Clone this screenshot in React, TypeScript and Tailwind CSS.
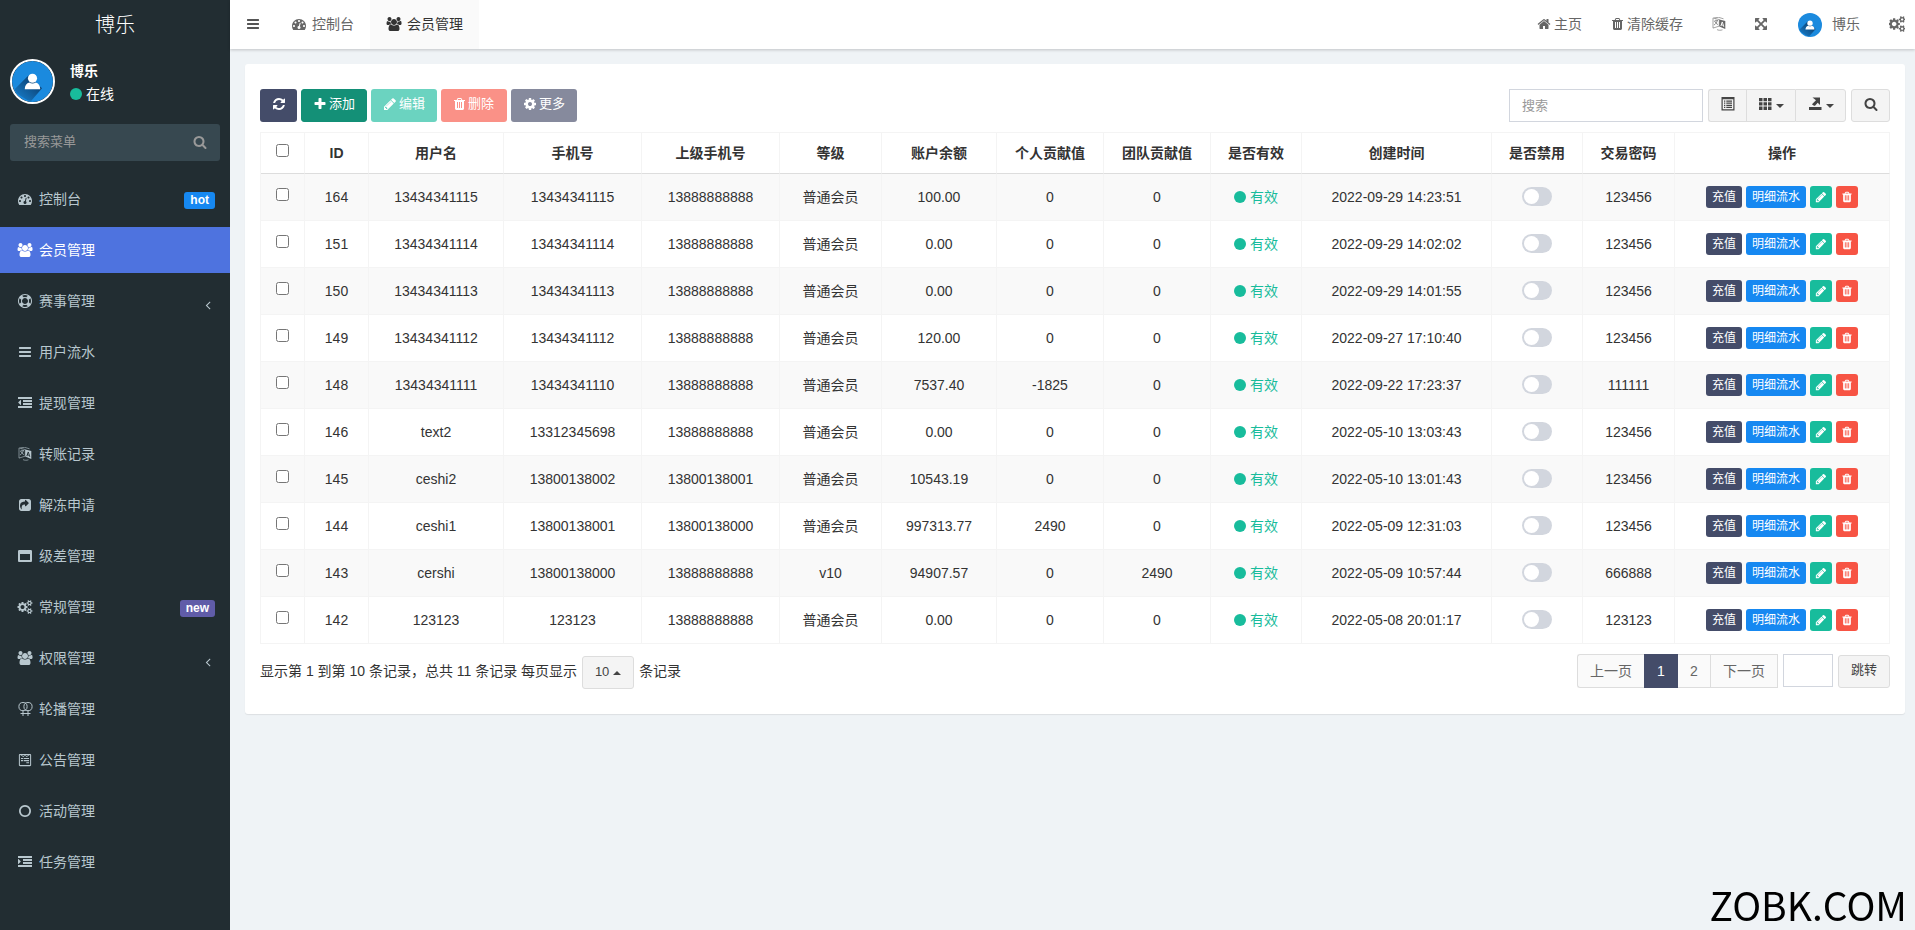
import React from "react";
import { FaWpforms } from "react-icons/fa";

const FONT = "font-['Liberation_Sans','Noto_Sans_CJK_SC',sans-serif]";

const BARS_TAIL =
  "m1440 768v192q0 13-9.500 22.500t-22.500 9.500h-1728q-13 0-22.500-9.500t-9.500-22.500v-192q0-13 9.500-22.500t22.500-9.500h1728q13 0 22.500 9.500t9.500 22.500zm0-384v192q0 13-9.500 22.500t-22.500 9.500h-1088q-13 0-22.500-9.500t-9.500-22.500v-192q0-13 9.500-22.500t22.500-9.500h1088q13 0 22.500 9.500t9.500 22.500zm0-384v192q0 13-9.500 22.500t-22.500 9.500h-1088q-13 0-22.500-9.500t-9.500-22.500v-192q0-13 9.500-22.500t22.500-9.500h1088q13 0 22.500 9.500t9.500 22.500zm0-384v192q0 13-9.500 22.500t-22.500 9.500h-1728q-13 0-22.500-9.500t-9.500-22.500v-192q0-13 9.500-22.500t22.500-9.500h1728q13 0 22.500 9.500t9.500 22.500z";

const PATHS: Record<string, string> = {
  bars: "M1664 1344v128q0 26-19 45t-45 19h-1408q-26 0-45-19t-19-45v-128q0-26 19-45t45-19h1408q26 0 45 19t19 45zm0-512v128q0 26-19 45t-45 19h-1408q-26 0-45-19t-19-45v-128q0-26 19-45t45-19h1408q26 0 45 19t19 45zm0-512v128q0 26-19 45t-45 19h-1408q-26 0-45-19t-19-45v-128q0-26 19-45t45-19h1408q26 0 45 19t19 45z",
  trash:
    "M704 1376v-704q0-14-9-23t-23-9h-64q-14 0-23 9t-9 23v704q0 14 9 23t23 9h64q14 0 23-9t9-23zm256 0v-704q0-14-9-23t-23-9h-64q-14 0-23 9t-9 23v704q0 14 9 23t23 9h64q14 0 23-9t9-23zm256 0v-704q0-14-9-23t-23-9h-64q-14 0-23 9t-9 23v704q0 14 9 23t23 9h64q14 0 23-9t9-23zm-544-992h448l-48-117q-7-9-17-11h-317q-10 2-17 11zm928 32v64q0 14-9 23t-23 9h-96v948q0 83-47 143.500t-113 60.500h-832q-66 0-113-58.500t-47-141.500v-952h-96q-14 0-23-9t-9-23v-64q0-14 9-23t23-9h309l70-167q15-37 54-63t79-26h320q40 0 79 26t54 63l70 167h309q14 0 23 9t9 23z",
  pencil:
    "M491 1536l91-91-235-235-91 91v107h128v128h107zm523-928q0-22-22-22-10 0-17 7l-542 542q-7 7-7 17 0 22 22 22 10 0 17-7l542-542q7-7 7-17zm-54-192l416 416-832 832h-416v-416zm683 96q0 53-37 90l-166 166-416-416 166-165q36-38 90-38 53 0 91 38l235 234q37 39 37 91z",
  refresh:
    "M1639 1056q0 5-1 7-64 268-268 434.500t-478 166.500q-146 0-282.500-55t-243.500-157l-129 129q-19 19-45 19t-45-19-19-45v-448q0-26 19-45t45-19h448q26 0 45 19t19 45-19 45l-137 137q71 66 161 102t187 36q134 0 250-65t186-179q11-17 53-117 8-23 30-23h192q13 0 22.500 9.500t9.500 22.500zm25-800v448q0 26-19 45t-45 19h-448q-26 0-45-19t-19-45 19-45l138-138q-148-137-349-137-134 0-250 65t-186 179q-11 17-53 117-8 23-30 23h-199q-13 0-22.500-9.500t-9.500-22.500v-7q65-268 270-434.500t480-166.500q146 0 284 55.500t245 156.500l130-129q19-19 45-19t45 19 19 45z",
  plus: "M1600 736v192q0 40-28 68t-68 28h-416v416q0 40-28 68t-68 28h-192q-40 0-68-28t-28-68v-416h-416q-40 0-68-28t-28-68v-192q0-40 28-68t68-28h416v-416q0-40 28-68t68-28h192q40 0 68 28t28 68v416h416q40 0 68 28t28 68z",
  cog: "M1152 896q0-106-75-181t-181-75-181 75-75 181 75 181 181 75 181-75 75-181zm512-109v222q0 12-8 23t-20 13l-185 28q-19 54-39 91 35 50 107 138 10 12 10 25t-9 23q-27 37-99 108t-94 71q-12 0-26-9l-138-108q-44 23-91 38-16 136-29 186-7 28-36 28h-222q-14 0-24.500-8.500t-11.500-21.500l-28-184q-49-16-90-37l-141 107q-10 9-25 9-14 0-25-11-126-114-165-168-7-10-7-23 0-12 8-23 15-21 51-66.500t54-70.500q-27-50-41-99l-183-27q-13-2-21-12.500t-8-23.500v-222q0-12 8-23t19-13l186-28q14-46 39-92-40-57-107-138-10-12-10-24 0-10 9-23 26-36 98.500-107.500t94.500-71.500q13 0 26 10l138 107q44-23 91-38 16-136 29-186 7-28 36-28h222q14 0 24.500 8.500t11.500 21.500l28 184q49 16 90 37l142-107q9-9 24-9 13 0 25 10 129 119 165 170 7 8 7 22 0 12-8 23-15 21-51 66.500t-54 70.500q26 50 41 98l183 28q13 2 21 12.500t8 23.500z",
  cogs: "M832 896q0-106-75-181t-181-75-181 75-75 181 75 181 181 75 181-75 75-181zm768 512q0-52-38-90t-90-38-90 38-38 90q0 53 37.500 90.500t90.500 37.500 90.500-37.500 37.500-90.500zm0-1024q0-52-38-90t-90-38-90 38-38 90q0 53 37.500 90.500t90.500 37.500 90.500-37.500 37.500-90.500zm-384 421v185q0 10-7 19.500t-16 10.500l-155 24q-11 35-32 76 34 48 90 115 7 11 7 20 0 12-7 19-23 30-82.500 89.500t-78.500 59.500q-11 0-21-7l-115-90q-37 19-77 31-11 108-23 155-7 24-30 24h-186q-11 0-20-7.500t-10-17.500l-23-153q-34-10-75-31l-118 89q-7 7-20 7-11 0-21-8-144-133-144-160 0-9 7-19 10-14 41-53t47-61q-23-44-35-82l-152-24q-10-1-17-9.500t-7-19.500v-185q0-10 7-19.500t16-10.500l155-24q11-35 32-76-34-48-90-115-7-11-7-20 0-12 7-20 22-30 82-89t79-59q11 0 21 7l115 90q34-18 77-32 11-108 23-154 7-24 30-24h186q11 0 20 7.500t10 17.500l23 153q34 10 75 31l118-89q8-7 20-7 11 0 21 8 144 133 144 160 0 8-7 19-12 16-42 54t-45 60q23 48 34 82l152 23q10 2 17 10.500t7 19.500zm640 533v140q0 16-149 31-12 27-30 52 51 113 51 138 0 4-4 7-122 71-124 71-8 0-46-47t-52-68q-20 2-30 2t-30-2q-14 21-52 68t-46 47q-2 0-124-71-4-3-4-7 0-25 51-138-18-25-30-52-149-15-149-31v-140q0-16 149-31 13-29 30-52-51-113-51-138 0-4 4-7 4-2 35-20t59-34 30-16q8 0 46 46.500t52 67.500q20-2 30-2t30 2q51-71 92-112l6-2q4 0 124 70 4 3 4 7 0 25-51 138 17 23 30 52 149 15 149 31zm0-1024v140q0 16-149 31-12 27-30 52 51 113 51 138 0 4-4 7-122 71-124 71-8 0-46-47t-52-68q-20 2-30 2t-30-2q-14 21-52 68t-46 47q-2 0-124-71-4-3-4-7 0-25 51-138-18-25-30-52-149-15-149-31v-140q0-16 149-31 13-29 30-52-51-113-51-138 0-4 4-7 4-2 35-20t59-34 30-16q8 0 46 46.500t52 67.500q20-2 30-2t30 2q51-71 92-112l6-2q4 0 124 70 4 3 4 7 0 25-51 138 17 23 30 52 149 15 149 31z",
  users:
    "M657 896q-162 5-265 128h-134q-82 0-138-40.500t-56-118.500q0-353 124-353 6 0 43.500 21t97.500 42.500 119 21.500q67 0 133-23-5 37-5 66 0 159 93 293zm1071 637q0 120-73 189.500t-194 69.500h-874q-121 0-194-69.500t-73-189.500q0-53 3.500-103.500t14-109 26.500-108.500 43-97.500 62-81 85.500-53.500 111.500-20q10 0 43 21.500t73 48 107 48 135 21.500 135-21.500 107-48 73-48 43-21.500q61 0 111.500 20t85.500 53.500 62 81 43 97.500 26.500 108.500 14 109 3.500 103.500zm-1024-1277q0 106-75 181t-181 75-181-75-75-181 75-181 181-75 181 75 75 181zm704 384q0 159-112.500 271.500t-271.500 112.500-271.500-112.500-112.500-271.500 112.500-271.500 271.500-112.500 271.500 112.500 112.500 271.500zm576 225q0 78-56 118.500t-138 40.500h-134q-103-123-265-128 93-134 93-293 0-29-5-66 66 23 133 23 59 0 119-21.500t97.500-42.500 43.500-21q124 0 124 353zm-128-609q0 106-75 181t-181 75-181-75-75-181 75-181 181-75 181 75 75 181z",
  dashboard:
    "M384 1152q0-53-37.500-90.500t-90.500-37.500-90.500 37.500-37.500 90.500 37.500 90.500 90.500 37.500 90.500-37.500 37.500-90.500zm192-448q0-53-37.500-90.500t-90.500-37.500-90.500 37.500-37.500 90.500 37.500 90.500 90.500 37.500 90.500-37.500 37.500-90.500zm428 481l101-382q6-26-7.500-48.500t-38.500-29.500-48 6.500-30 39.500l-101 382q-60 5-107 43.500t-63 98.500q-20 77 20 146t117 89 146-20 89-117q16-60-6-117t-72-91zm660-33q0-53-37.500-90.500t-90.500-37.500-90.500 37.500-37.500 90.500 37.500 90.500 90.500 37.500 90.500-37.500 37.500-90.500zm-640-640q0-53-37.500-90.500t-90.500-37.500-90.500 37.500-37.500 90.500 37.500 90.500 90.500 37.500 90.500-37.500 37.500-90.500zm448 192q0-53-37.500-90.500t-90.500-37.500-90.500 37.500-37.500 90.500 37.500 90.500 90.500 37.500 90.500-37.500 37.500-90.500zm320 448q0 261-141 483-19 29-54 29h-1402q-35 0-54-29-141-221-141-483 0-182 71-348t191-286 286-191 348-71 348 71 286 191 191 286 71 348z",
  home: "M1472 992v480q0 26-19 45t-45 19h-384v-384h-256v384h-384q-26 0-45-19t-19-45v-480q0-1 .5-3t.5-3l575-474 575 474q1 2 1 6zm223-69l-62 74q-8 9-21 11h-3q-13 0-21-7l-692-577-692 577q-12 8-24 7-13-2-21-11l-62-74q-8-10-7-23.500t11-21.500l719-599q32-26 76-26t76 26l244 204v-195q0-14 9-23t23-9h192q14 0 23 9t9 23v408l219 182q10 8 11 21.500t-7 23.500z",
  search:
    "M1216 832q0-185-131.500-316.500t-316.500-131.500-316.500 131.500-131.500 316.500 131.500 316.500 316.500 131.500 316.500-131.500 131.500-316.500zm512 832q0 52-38 90t-90 38q-54 0-90-38l-343-342q-179 124-399 124-143 0-273.500-55.500t-225-150-150-225-55.500-273.500 55.500-273.500 150-225 225-150 273.500-55.500 273.500 55.500 225 150 150 225 55.500 273.500q0 220-124 399l343 343q37 37 37 90z",
  angleLeft:
    "M1203 544q0 13-10 23l-393 393 393 393q10 10 10 23t-10 23l-50 50q-10 10-23 10t-23-10l-466-466q-10-10-10-23t10-23l466-466q10-10 23-10t23 10l50 50q10 10 10 23z",
  dedent:
    "M384 544v576q0 13-9.500 22.500t-22.500 9.500q-14 0-23-9l-288-288q-9-9-9-23t9-23l288-288q9-9 23-9 13 0 22.500 9.500t9.500 22.500zM352 544" +
    BARS_TAIL,
  indent:
    "M352 832q0 14-9 23l-288 288q-9 9-23 9-13 0-22.500-9.500t-9.500-22.500v-576q0-13 9.500-22.500t22.500-9.500q14 0 23 9l288 288q9 9 9 23zM352 544" +
    BARS_TAIL,
  lifeRing:
    "M896 0q182 0 348 71t286 191 191 286 71 348-71 348-191 286-286 191-348 71-348-71-286-191-191-286-71-348 71-348 191-286 286-191 348-71zm0 128q-190 0-361 90l194 194q82-28 167-28t167 28l194-194q-171-90-361-90zm-678 1129l194-194q-28-82-28-167t28-167l-194-194q-90 171-90 361t90 361zm678 407q190 0 361-90l-194-194q-82 28-167 28t-167-28l-194 194q171 90 361 90zm0-384q159 0 271.500-112.500t112.500-271.500-112.500-271.500-271.500-112.500-271.500 112.500-112.500 271.500 112.500 271.500 271.500 112.500zm484-217l194 194q90-171 90-361t-90-361l-194 194q28 82 28 167t-28 167z",
  share:
    "M1005 1052l352-352q19-19 19-45t-19-45l-352-352q-30-31-69-14-40 17-40 59v160q-119 0-216 19.500t-162.500 51-114 79-76.500 95.500-44.500 109-21.500 111.500-5 110.500q0 181 167 404 11 12 25 12 7 0 13-3 22-9 19-33-44-354 62-473 46-52 130-75.500t224-23.500v160q0 42 40 59 12 5 24 5 26 0 45-19zm659-636v960q0 119-84.500 203.500t-203.500 84.500h-960q-119 0-203.500-84.500t-84.500-203.500v-960q0-119 84.500-203.500t203.500-84.500h960q119 0 203.500 84.500t84.500 203.500z",
  windowMax:
    "M256 1408h1280v-768h-1280v768zm1536-1120v1216q0 66-47 113t-113 47h-1472q-66 0-113-47t-47-113v-1216q0-66 47-113t113-47h1472q66 0 113 47t47 113z",
  circleO:
    "M896 352q-148 0-273 73t-198 198-73 273 73 273 198 198 273 73 273-73 198-198 73-273-73-273-198-198-273-73zm768 544q0 209-103 385.500t-279.500 279.500-385.500 103-385.500-103-279.500-279.500-103-385.500 103-385.500 279.500-279.500 385.500-103 385.500 103 279.500 279.500 103 385.500z",
  arrows:
    "M1411 541l-355 355 355 355 144-144q29-31 70-14 39 17 39 59v448q0 26-19 45t-45 19h-448q-42 0-59-40-17-39 14-69l144-144-355-355-355 355 144 144q31 30 14 69-17 40-59 40h-448q-26 0-45-19t-19-45v-448q0-42 40-59 39-17 69 14l144 144 355-355-355-355-144 144q-19 19-45 19-12 0-24-5-40-17-40-59v-448q0-26 19-45t45-19h448q42 0 59 40 17 39-14 69l-144 144 355 355 355-355-144-144q-31-30-14-69 17-40 59-40h448q26 0 45 19t19 45v448q0 42-39 59-13 5-25 5-26 0-45-19z",
};

const BOXES: Record<string, string> = { users: "0 0 2048 1792", trash: "192 0 1408 1792" };

function Icon({ name, className = "h-3.5 w-3.5" }: { name: string; className?: string }) {
  if (name === "language") return <LanguageIcon />;
  if (name === "venus") return <VenusDoubleIcon />;
  if (name === "form") return <FaWpforms className="h-3.5 w-3.5 shrink-0" aria-hidden="true" />;
  return (
    <svg viewBox={BOXES[name] ?? "0 0 1792 1792"} className={`shrink-0 fill-current ${className}`} aria-hidden="true">
      <path d={PATHS[name]} />
    </svg>
  );
}

function VenusDoubleIcon() {
  return (
    <svg viewBox="0 0 15 14" className="h-3.5 w-[15px] shrink-0" fill="none" stroke="currentColor" aria-hidden="true">
      <circle cx="5" cy="4.600" r="4.100" />
      <circle cx="10" cy="4.600" r="4.100" />
      <path d="M5 8.700V14M10 8.700V14M2.500 11.500h10" />
    </svg>
  );
}

function LanguageIcon() {
  return (
    <svg viewBox="0 0 14 14" className="h-3.5 w-3.5 shrink-0" fill="none" stroke="currentColor" aria-hidden="true">
      <path d="M7.300 2.600 1 .9v10.200l6.300-2z" strokeWidth=".6" />
      <path d="M2 4.300l4-.9M3.900 2.700v1M5.300 3.700C4.800 5.600 3.700 7.100 2 8M2.900 4.700c.7 1.400 1.700 2.300 3.200 3" strokeWidth=".7" />
      <path d="M2.200.9 6.500.3l5 1.500M5 12.600c1.500.8 3.500.9 5.500.2" strokeWidth=".6" />
      <path
        fillRule="evenodd"
        stroke="none"
        fill="currentColor"
        d="M7.300 2.500 13.300 4v8L7.300 9.500zM9.800 4.800 8.400 8.900l.9.300.3-.9 1.500.5.300 1 .9.300-1.500-5zM9.900 7.500l.5-1.500.5 1.800z"
      />
    </svg>
  );
}

function Avatar({ id, className }: { id: string; className: string }) {
  return (
    <svg viewBox="0 0 45 45" className={`shrink-0 ${className}`} role="img" aria-label="博乐">
      <defs>
        <linearGradient id={id} x1="1" y1="0" x2="0" y2="1">
          <stop offset=".3" stopColor="#0d4a80" />
          <stop offset="1" stopColor="#1a87d8" />
        </linearGradient>
        <clipPath id={`${id}-clip`}>
          <circle cx="22.500" cy="22.500" r="21.500" />
        </clipPath>
      </defs>
      <circle cx="22.500" cy="22.500" r="22.500" fill="#1b8ade" />
      <path d="M18 16 1 33l19 12 13-15z" fill={`url(#${id})`} clipPath={`url(#${id}-clip)`} />
      <circle cx="22.500" cy="19" r="5" fill="#fff" />
      <path d="M14 31c0-4 2-6.500 5-7.300 2 1.500 5 1.500 7 0 3 .8 5 3.300 5 7.300z" fill="#fff" />
    </svg>
  );
}

function Caret({ up = false }: { up?: boolean }) {
  return (
    <svg viewBox="0 0 8 4" className="h-1 w-2 shrink-0 fill-current" aria-hidden="true">
      <path d={up ? "M0 4 4 0l4 4z" : "M0 0h8L4 4z"} />
    </svg>
  );
}

type MenuItem = { icon: string; label: string; badge?: "hot" | "new"; arrow?: boolean; active?: boolean };

const MENU: MenuItem[] = [
  { icon: "dashboard", label: "控制台", badge: "hot" },
  { icon: "users", label: "会员管理", active: true },
  { icon: "lifeRing", label: "赛事管理", arrow: true },
  { icon: "bars", label: "用户流水" },
  { icon: "dedent", label: "提现管理" },
  { icon: "language", label: "转账记录" },
  { icon: "share", label: "解冻申请" },
  { icon: "windowMax", label: "级差管理" },
  { icon: "cogs", label: "常规管理", badge: "new" },
  { icon: "users", label: "权限管理", arrow: true },
  { icon: "venus", label: "轮播管理" },
  { icon: "form", label: "公告管理" },
  { icon: "circleO", label: "活动管理" },
  { icon: "indent", label: "任务管理" },
];

const BADGES = { hot: "bg-[#1688f1]", new: "bg-[#605ca8]" };

function Sidebar() {
  return (
    <aside className="w-[230px] shrink-0 bg-[#222d32] text-white">
      <a href="#" className="flex h-[50px] items-center justify-center text-xl font-light">
        博乐
      </a>
      <div className="flex items-center gap-[15px] px-2.5 pt-[9px]">
        <Avatar id="side-avatar" className="h-[45px] w-[45px] rounded-full border-2 border-white" />
        <div className="flex flex-col gap-[3px] pt-0.5 text-sm leading-5">
          <p className="font-bold">博乐</p>
          <a href="#" className="flex items-center gap-1">
            <span className="h-3 w-3 rounded-full bg-[#18bc9c]" />
            在线
          </a>
        </div>
      </div>
      <form className="mx-2.5 mt-5 flex h-[37px] items-center rounded-[3px] bg-[#374850] pb-0.5" onSubmit={(e) => e.preventDefault()}>
        <input
          type="text"
          aria-label="搜索菜单"
          placeholder="搜索菜单"
          className="min-w-0 flex-1 bg-transparent pl-3.5 text-[13px] text-white outline-none placeholder:text-[#999]"
        />
        <button type="submit" aria-label="搜索" className="px-[13px] text-[#999]">
          <Icon name="search" />
        </button>
      </form>
      <nav className="mt-[15px] flex flex-col gap-[5px]">
        {MENU.map((item) => (
          <a
            key={item.label}
            href="#"
            className={`flex h-[46px] items-center pr-[15px] pl-4 text-sm ${
              item.active ? "bg-[#4e73df] text-white" : "text-[#b8c7ce]"
            }`}
          >
            <span className="mr-[5px] flex w-[18px] justify-center">
              <Icon name={item.icon} className={item.icon === "users" || item.icon === "cogs" ? "h-3.5 w-4" : "h-3.5 w-3.5"} />
            </span>
            <span className="flex-1">{item.label}</span>
            {item.badge && (
              <span className={`mt-0.5 rounded-[3px] px-1.5 text-xs leading-[17px] font-bold text-white ${BADGES[item.badge]}`}>
                {item.badge}
              </span>
            )}
            {item.arrow && <Icon name="angleLeft" className="mt-2 h-3.5 w-3.5" />}
          </a>
        ))}
      </nav>
    </aside>
  );
}

function TopBar() {
  return (
    <header className="relative flex h-[49px] items-stretch bg-white text-sm text-[#666] shadow-[0_1px_3px_rgba(0,0,0,0.2)]">
      <button type="button" aria-label="切换菜单" className="px-4 pb-0.5 text-[#555]">
        <Icon name="bars" />
      </button>
      <nav className="flex">
        <a href="#" className="flex items-center gap-1.5 px-4 pb-0.5">
          <Icon name="dashboard" />
          控制台
        </a>
        <a href="#" className="flex items-center gap-[5px] bg-[#fafafa] px-4 pb-0.5 text-[#333]">
          <Icon name="users" className="h-3.5 w-4" />
          会员管理
        </a>
      </nav>
      <nav className="ml-auto flex pr-2.5 pb-0.5">
        <a href="#" className="flex items-center gap-[3px] pr-[15px] pl-3.5">
          <Icon name="home" />
          主页
        </a>
        <a href="#" className="flex items-center gap-1 px-[15px]">
          <Icon name="trash" className="h-3.5 w-[11px]" />
          清除缓存
        </a>
        <a href="#" aria-label="语言" className="flex items-center px-3.5">
          <Icon name="language" />
        </a>
        <a href="#" aria-label="全屏" className="flex items-center px-3.5">
          <Icon name="arrows" />
        </a>
        <a href="#" className="flex items-center gap-2.5 pr-[15px] pl-4">
          <Avatar id="top-avatar" className="mt-0.5 h-6 w-6" />
          博乐
        </a>
        <a href="#" aria-label="设置" className="flex items-center pl-3.5">
          <Icon name="cogs" className="h-4 w-4" />
        </a>
      </nav>
    </header>
  );
}

type Row = [string, string, string, string, string, string, string, string, string, string];

const ROWS: Row[] = [
  ["164", "13434341115", "13434341115", "13888888888", "普通会员", "100.00", "0", "0", "2022-09-29 14:23:51", "123456"],
  ["151", "13434341114", "13434341114", "13888888888", "普通会员", "0.00", "0", "0", "2022-09-29 14:02:02", "123456"],
  ["150", "13434341113", "13434341113", "13888888888", "普通会员", "0.00", "0", "0", "2022-09-29 14:01:55", "123456"],
  ["149", "13434341112", "13434341112", "13888888888", "普通会员", "120.00", "0", "0", "2022-09-27 17:10:40", "123456"],
  ["148", "13434341111", "13434341110", "13888888888", "普通会员", "7537.40", "-1825", "0", "2022-09-22 17:23:37", "111111"],
  ["146", "text2", "13312345698", "13888888888", "普通会员", "0.00", "0", "0", "2022-05-10 13:03:43", "123456"],
  ["145", "ceshi2", "13800138002", "13800138001", "普通会员", "10543.19", "0", "0", "2022-05-10 13:01:43", "123456"],
  ["144", "ceshi1", "13800138001", "13800138000", "普通会员", "997313.77", "2490", "0", "2022-05-09 12:31:03", "123456"],
  ["143", "cershi", "13800138000", "13888888888", "v10", "94907.57", "0", "2490", "2022-05-09 10:57:44", "666888"],
  ["142", "123123", "123123", "13888888888", "普通会员", "0.00", "0", "0", "2022-05-08 20:01:17", "123123"],
];

const COLUMNS: [string, string][] = [
  ["ID", "w-[64px]"],
  ["用户名", "w-[135px]"],
  ["手机号", "w-[138px]"],
  ["上级手机号", "w-[138px]"],
  ["等级", "w-[102px]"],
  ["账户余额", "w-[115px]"],
  ["个人贡献值", "w-[107px]"],
  ["团队贡献值", "w-[107px]"],
  ["是否有效", "w-[91px]"],
  ["创建时间", "w-[190px]"],
  ["是否禁用", "w-[91px]"],
  ["交易密码", "w-[92px]"],
  ["操作", "w-[215px]"],
];

const CELL = "border-r border-b border-[#f4f4f4] p-0";
const SMALL = "flex h-[22px] items-center justify-center rounded-[3px] text-xs text-white";

function MemberTable() {
  return (
    <table className="mt-2.5 w-full table-fixed border-separate border-spacing-0 border-t border-l border-[#f4f4f4] text-center text-sm text-[#333]">
      <thead>
        <tr className="h-[41px]">
          <th className="w-[44px] border-r border-b border-[#f4f4f4] border-b-[#ddd] p-0">
            <input type="checkbox" aria-label="全选" className="mb-1.5 align-middle" />
          </th>
          {COLUMNS.map(([label, width]) => (
            <th key={label} className={`border-r border-b border-[#f4f4f4] border-b-[#ddd] p-0 font-bold ${width}`}>
              {label}
            </th>
          ))}
        </tr>
      </thead>
      <tbody>
        {ROWS.map((row) => (
          <tr key={row[0]} className="h-[47px] odd:bg-[#f9f9f9]">
            <td className={CELL}>
              <input type="checkbox" aria-label={`选择 ${row[0]}`} className="mb-1.5 align-middle" />
            </td>
            {row.slice(0, 8).map((value, i) => (
              <td key={i} className={CELL}>
                {value}
              </td>
            ))}
            <td className={CELL}>
              <a href="#" className="flex items-center justify-center gap-1 text-[#18bc9c]">
                <span className="h-3 w-3 rounded-full bg-[#18bc9c]" />
                有效
              </a>
            </td>
            <td className={CELL}>{row[8]}</td>
            <td className={CELL}>
              <input
                type="checkbox"
                role="switch"
                aria-label={`禁用 ${row[0]}`}
                className="mb-0.5 h-[19px] w-[30px] appearance-none rounded-full bg-[#d2d6de] p-0.5 align-middle before:block before:h-[15px] before:w-[15px] before:rounded-full before:bg-white checked:bg-[#18bc9c] checked:before:ml-[11px]"
              />
            </td>
            <td className={CELL}>{row[9]}</td>
            <td className={CELL}>
              <div className="flex justify-center gap-1">
                <button type="button" className={`${SMALL} bg-[#444c69] px-1.5`}>
                  充值
                </button>
                <button type="button" className={`${SMALL} bg-[#1688f1] px-1.5`}>
                  明细流水
                </button>
                <button type="button" aria-label="编辑" className={`${SMALL} w-[22px] bg-[#18bc9c]`}>
                  <Icon name="pencil" className="h-3 w-3" />
                </button>
                <button type="button" aria-label="删除" className={`${SMALL} w-[22px] bg-[#f75444]`}>
                  <Icon name="trash" className="h-3 w-3" />
                </button>
              </div>
            </td>
          </tr>
        ))}
      </tbody>
    </table>
  );
}

const TOOL = "flex h-[33px] items-center justify-center rounded-[3px] pb-[3px] text-[13px] text-white";
const PLAIN = "flex h-[33px] items-center justify-center border border-[#ddd] bg-[#f4f4f4] text-[13px] text-[#444]";

function Toolbar() {
  return (
    <div className="flex items-center justify-between">
      <div className="flex gap-1">
        <button type="button" aria-label="刷新" className={`${TOOL} w-[37px] bg-[#444c69]`}>
          <Icon name="refresh" />
        </button>
        <button type="button" className={`${TOOL} gap-0.5 border border-[#128f76] bg-[#149077] px-[11px]`}>
          <Icon name="plus" />
          添加
        </button>
        <button type="button" className={`${TOOL} gap-0.5 bg-[#6bd3c0] px-3`}>
          <Icon name="pencil" />
          编辑
        </button>
        <button type="button" className={`${TOOL} gap-[3px] bg-[#fa9187] px-[13px]`}>
          <Icon name="trash" className="h-3.5 w-[11px]" />
          删除
        </button>
        <button type="button" className={`${TOOL} gap-0.5 bg-[#868a9d] px-3`}>
          <Icon name="cog" />
          更多
        </button>
      </div>
      <div className="flex gap-[5px]">
        <input
          type="text"
          aria-label="搜索"
          placeholder="搜索"
          className="h-[33px] w-[194px] border border-[#d2d6de] bg-white px-3 text-[13px] outline-none placeholder:text-[#999]"
        />
        <div className="flex">
          <button type="button" aria-label="切换视图" className={`${PLAIN} w-[38px] rounded-l-[3px] border-r-0 pb-1`}>
            <svg viewBox="0 0 14 14" className="h-3.5 w-3.5 fill-current" aria-hidden="true">
              <path
                fillRule="evenodd"
                d="M.5 0h13v13.500H.5zM1.700 2.200v10h10.600v-10zM3 3.500h1.300v1.200H3zM5.300 3.500H11v1.200H5.300zM3 5.600h1.300v1.200H3zM5.300 5.600H11v1.200H5.300zM3 7.700h1.300v1.200H3zM5.300 7.700H11v1.200H5.300zM3 9.800h1.300V11H3zM5.300 9.800H11V11H5.300z"
              />
            </svg>
          </button>
          <button type="button" aria-label="列" className={`${PLAIN} w-[49px] gap-1 border-r-0 pb-[3px]`}>
            <svg viewBox="0 0 14 14" className="h-3.5 w-3.5 fill-current" aria-hidden="true">
              <path d="M1 1h3.500v3.300H1zM5.500 1H9v3.300H5.500zM10 1h3.500v3.300H10zM1 5.300h3.500v3.300H1zM5.500 5.300H9v3.300H5.500zM10 5.300h3.500v3.300H10zM1 9.600h3.500v3.300H1zM5.500 9.600H9v3.300H5.500zM10 9.600h3.500v3.300H10z" />
            </svg>
            <span className="pt-1">
              <Caret />
            </span>
          </button>
          <button type="button" aria-label="导出" className={`${PLAIN} w-[51px] gap-1 rounded-r-[3px] pb-[3px]`}>
            <svg viewBox="0 0 14 14" className="h-3.5 w-3.5 fill-current" aria-hidden="true">
              <path d="M1 10h12.500v3H1zM4.500.5H12V8L9.700 5.700 7 8.700c-1.200 0-2.500-.6-3-1.500l4-4z" />
            </svg>
            <span className="pt-1">
              <Caret />
            </span>
          </button>
        </div>
        <button type="button" aria-label="搜索" className={`${PLAIN} w-[39px] rounded-[3px] pb-1`}>
          <Icon name="search" />
        </button>
      </div>
    </div>
  );
}

const PAGE = "flex h-[34px] items-center border-y border-[#ddd] bg-[#fafafa] text-[#666]";

function Pagination() {
  return (
    <div className="mt-2.5 flex items-start justify-between text-sm text-[#333]">
      <div className="flex items-center gap-[5px] pt-0.5">
        <span className="pb-1">显示第 1 到第 10 条记录，总共 11 条记录 每页显示</span>
        <button type="button" className={`${PLAIN} w-[52px] gap-1 rounded-[3px]`}>
          10
          <Caret up />
        </button>
        <span className="pb-1">条记录</span>
      </div>
      <div className="flex gap-[5px]">
        <nav className="flex">
          <a href="#" className={`${PAGE} rounded-l-[3px] border-l px-3`}>
            上一页
          </a>
          <a href="#" aria-current="page" className="flex h-[34px] w-[34px] items-center justify-center bg-[#444c69] text-white">
            1
          </a>
          <a href="#" className={`${PAGE} w-8 justify-center`}>
            2
          </a>
          <a href="#" className={`${PAGE} border-x px-3`}>
            下一页
          </a>
        </nav>
        <input type="text" aria-label="页码" className="h-[33px] w-[50px] border border-[#d2d6de] bg-white px-2 outline-none" />
        <button type="button" className={`${PLAIN} mt-px w-[52px] rounded-[3px] pb-0.5`}>
          跳转
        </button>
      </div>
    </div>
  );
}

export default function App() {
  return (
    <div className={`flex min-h-screen bg-[#eff3f6] ${FONT}`}>
      <Sidebar />
      <div className="flex min-w-0 flex-1 flex-col">
        <TopBar />
        <main className="pt-[15px] pr-2.5 pl-[15px]">
          <section className="rounded-[3px] bg-white px-[15px] py-[25px] shadow-[0_1px_1px_rgba(0,0,0,0.08)]">
            <Toolbar />
            <MemberTable />
            <Pagination />
          </section>
        </main>
      </div>
      <p className="pointer-events-none fixed right-2 bottom-1.5 font-['Noto_Sans_CJK_SC',sans-serif] text-[39px] leading-10 text-black">
        ZOBK.COM
      </p>
    </div>
  );
}
